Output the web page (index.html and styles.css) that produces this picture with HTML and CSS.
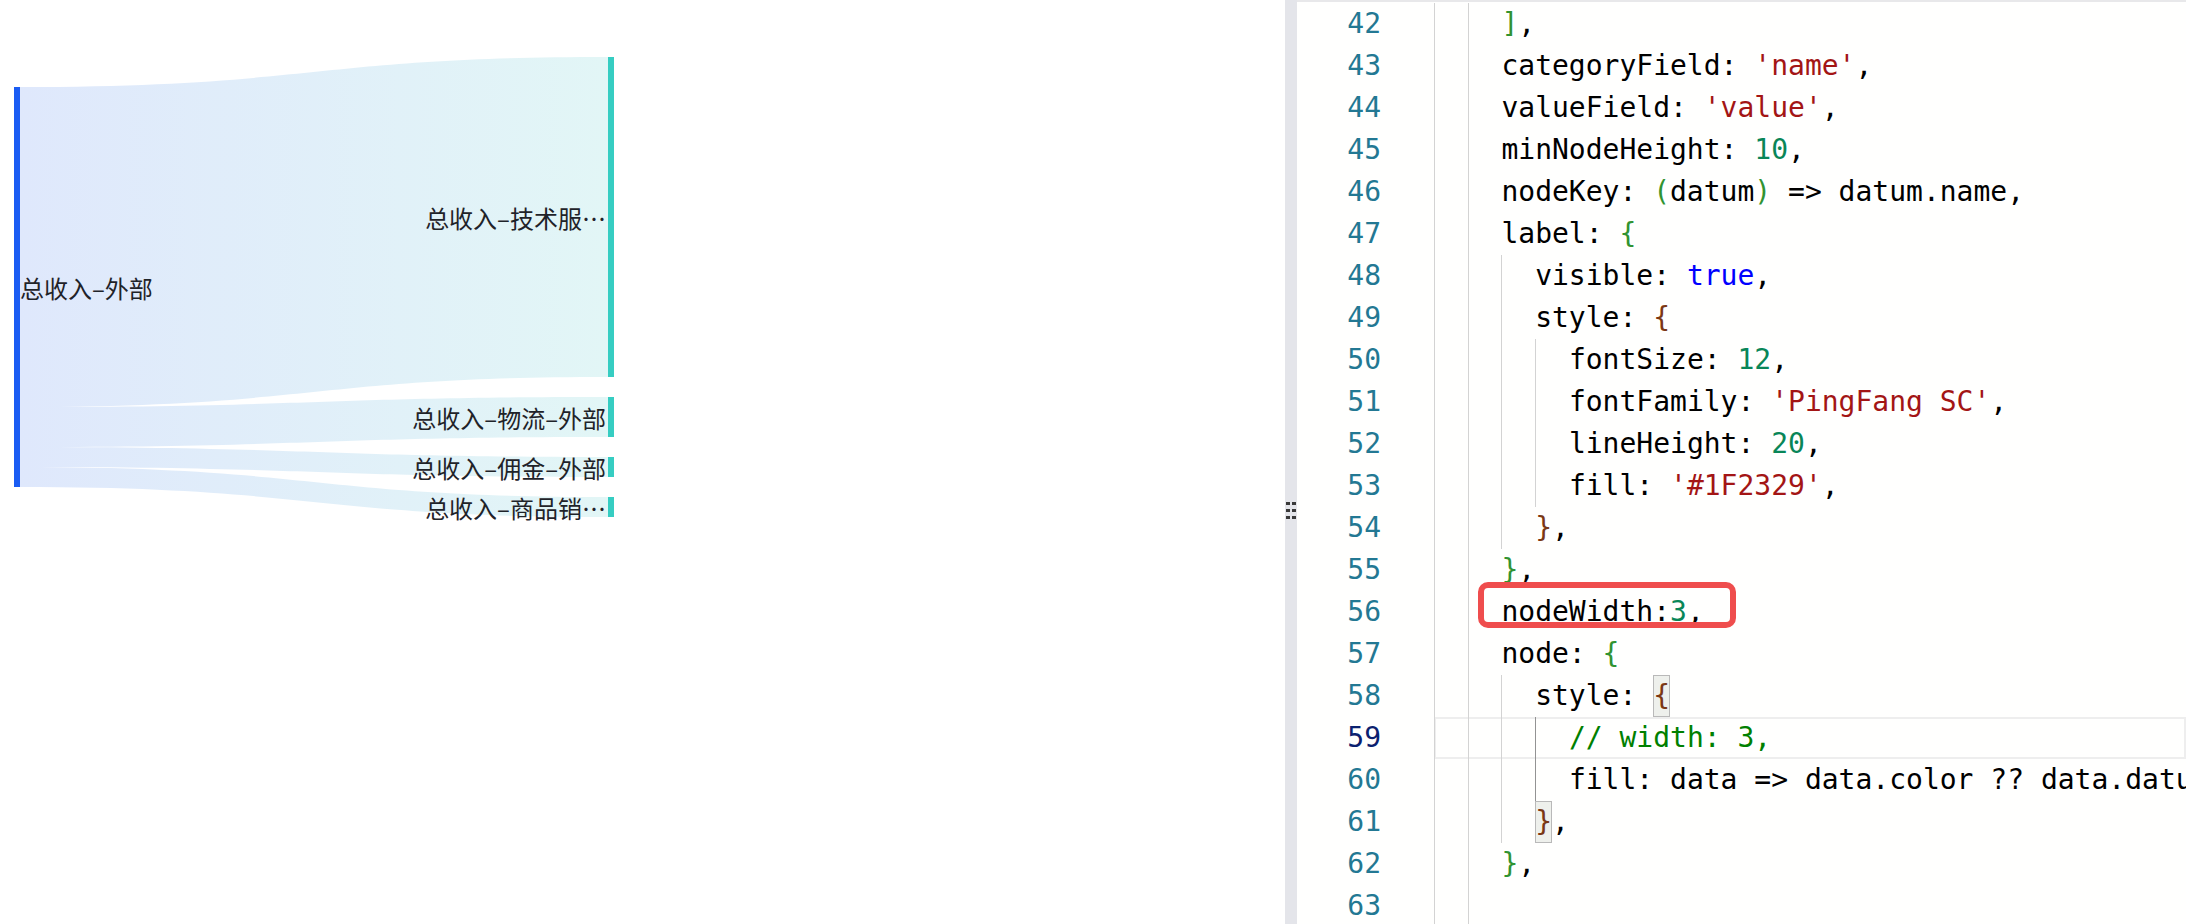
FILE: index.html
```html
<!DOCTYPE html>
<html lang="zh-CN">
<head>
<meta charset="utf-8">
<title>Sankey nodeWidth</title>
<link rel="stylesheet" href="styles.css">
</head>
<body>
<div class="app">
  <section class="chart-pane">
    <svg class="sankey" width="1285" height="924" viewBox="0 0 1285 924">
      <defs>
        <linearGradient id="lg" x1="20" y1="0" x2="608" y2="0" gradientUnits="userSpaceOnUse">
          <stop offset="0" stop-color="#dfe8fc"/>
          <stop offset="1" stop-color="#e2f6f6"/>
        </linearGradient>
      </defs>
      <path class="link" d="M20,87 C314,87 314,57 608,57 L608,377 C314,377 314,407 20,407 Z"/>
      <path class="link" d="M20,407 C314,407 314,397 608,397 L608,437 C314,437 314,447 20,447 Z"/>
      <path class="link" d="M20,447 C314,447 314,457 608,457 L608,477 C314,477 314,467 20,467 Z"/>
      <path class="link" d="M20,467 C314,467 314,497 608,497 L608,517 C314,517 314,487 20,487 Z"/>
      <rect class="node-src" x="14" y="87" width="6" height="400"/>
      <rect class="node-tgt" x="608" y="57" width="6" height="320"/>
      <rect class="node-tgt" x="608" y="397" width="6" height="40"/>
      <rect class="node-tgt" x="608" y="457" width="6" height="20"/>
      <rect class="node-tgt" x="608" y="497" width="6" height="20"/>
      <text class="lbl" x="20" y="287">总收入–外部</text>
      <text class="lbl end" x="606" y="217">总收入–技术服…</text>
      <text class="lbl end" x="606" y="417">总收入–物流–外部</text>
      <text class="lbl end" x="606" y="467">总收入–佣金–外部</text>
      <text class="lbl end" x="606" y="507">总收入–商品销…</text>
    </svg>
  </section>

  <div class="divider"><div class="handle"><i></i><i></i><i></i><i></i><i></i><i></i></div></div>

  <section class="editor">
    <div class="gutter">
      <div class="ln">42</div><div class="ln">43</div><div class="ln">44</div><div class="ln">45</div>
      <div class="ln">46</div><div class="ln">47</div><div class="ln">48</div><div class="ln">49</div>
      <div class="ln">50</div><div class="ln">51</div><div class="ln">52</div><div class="ln">53</div>
      <div class="ln">54</div><div class="ln">55</div><div class="ln">56</div><div class="ln">57</div>
      <div class="ln">58</div><div class="ln active">59</div><div class="ln">60</div><div class="ln">61</div>
      <div class="ln">62</div><div class="ln">63</div>
    </div>
    <div class="code">
      <div class="line"><span class="g">  </span><span class="g">  </span><span class="b2">]</span>,</div>
      <div class="line"><span class="g">  </span><span class="g">  </span>categoryField: <span class="s">'name'</span>,</div>
      <div class="line"><span class="g">  </span><span class="g">  </span>valueField: <span class="s">'value'</span>,</div>
      <div class="line"><span class="g">  </span><span class="g">  </span>minNodeHeight: <span class="n">10</span>,</div>
      <div class="line"><span class="g">  </span><span class="g">  </span>nodeKey: <span class="b2">(</span>datum<span class="b2">)</span> =&gt; datum.name,</div>
      <div class="line"><span class="g">  </span><span class="g">  </span>label: <span class="b2">{</span></div>
      <div class="line"><span class="g">  </span><span class="g">  </span><span class="g">  </span>visible: <span class="k">true</span>,</div>
      <div class="line"><span class="g">  </span><span class="g">  </span><span class="g">  </span>style: <span class="b3">{</span></div>
      <div class="line"><span class="g">  </span><span class="g">  </span><span class="g">  </span><span class="g">  </span>fontSize: <span class="n">12</span>,</div>
      <div class="line"><span class="g">  </span><span class="g">  </span><span class="g">  </span><span class="g">  </span>fontFamily: <span class="s">'PingFang SC'</span>,</div>
      <div class="line"><span class="g">  </span><span class="g">  </span><span class="g">  </span><span class="g">  </span>lineHeight: <span class="n">20</span>,</div>
      <div class="line"><span class="g">  </span><span class="g">  </span><span class="g">  </span><span class="g">  </span>fill: <span class="s">'#1F2329'</span>,</div>
      <div class="line"><span class="g">  </span><span class="g">  </span><span class="g">  </span><span class="b3">}</span>,</div>
      <div class="line"><span class="g">  </span><span class="g">  </span><span class="b2">}</span>,</div>
      <div class="line"><span class="g">  </span><span class="g">  </span>nodeWidth:<span class="n">3</span>,</div>
      <div class="line"><span class="g">  </span><span class="g">  </span>node: <span class="b2">{</span></div>
      <div class="line"><span class="g">  </span><span class="g">  </span><span class="g">  </span>style: <span class="b3 match">{</span></div>
      <div class="line current"><span class="g">  </span><span class="g">  </span><span class="g">  </span><span class="g act">  </span><span class="c">// width: 3,</span></div>
      <div class="line"><span class="g">  </span><span class="g">  </span><span class="g">  </span><span class="g act">  </span>fill: data =&gt; data.color ?? data.datum?.color,</div>
      <div class="line"><span class="g">  </span><span class="g">  </span><span class="g">  </span><span class="b3 match">}</span>,</div>
      <div class="line"><span class="g">  </span><span class="g">  </span><span class="b2">}</span>,</div>
      <div class="line"><span class="g">  </span><span class="g">  </span></div>
    </div>
    <div class="annot"></div>
  </section>
</div>
</body>
</html>
```
FILE: styles.css
```css
html, body {
  margin: 0;
  padding: 0;
  background: #ffffff;
}
.app {
  display: flex;
  width: 2186px;
  height: 924px;
  overflow: hidden;
}
.chart-pane {
  width: 1285px;
  flex: none;
  background: #ffffff;
}
.sankey {
  display: block;
}
.link {
  fill: url(#lg);
}
.node-src {
  fill: #1a5cf3;
}
.node-tgt {
  fill: #36cdc2;
}
.lbl {
  font-family: "Noto Sans CJK SC", "Noto Sans", sans-serif;
  font-size: 24px;
  fill: #1f2329;
  dominant-baseline: central;
}
.lbl.end {
  text-anchor: end;
}
.divider {
  width: 12px;
  flex: none;
  background: #e4e5ea;
  display: flex;
  flex-direction: column;
  align-items: center;
}
.handle {
  margin-top: 502px;
  display: grid;
  grid-template-columns: 4px 4px;
  column-gap: 2px;
  row-gap: 4px;
}
.handle i {
  display: block;
  width: 4px;
  height: 3px;
  background: #3a3a3a;
}
.editor {
  position: relative;
  flex: 1;
  display: flex;
  border-top: 2px solid #e8e8ea;
  padding-top: 1px;
  font-family: "DejaVu Sans Mono", "Liberation Mono", monospace;
  font-size: 28px;
  background: #fffffe;
  overflow: hidden;
}
.gutter {
  width: 137px;
  flex: none;
}
.ln {
  height: 42px;
  line-height: 42px;
  text-align: right;
  padding-right: 53px;
  color: #237893;
}
.ln.active {
  color: #0b216f;
}
.code {
  flex: 1;
  min-width: 0;
}
.line {
  height: 42px;
  line-height: 42px;
  white-space: pre;
  color: #000000;
}
.line.current {
  box-shadow: inset 0 0 0 2px #eeeeee;
}
.g {
  display: inline-block;
  height: 42px;
  vertical-align: top;
  box-shadow: inset 1px 0 0 #d3d3d3;
}
.g.act {
  box-shadow: inset 1px 0 0 #939393;
}
.s { color: #a31515; }
.n { color: #098658; }
.k { color: #0000ff; }
.c { color: #008000; }
.b2 { color: #319331; }
.b3 { color: #7b3814; }
.match {
  display: inline-block;
  height: 42px;
  vertical-align: top;
  background: #eef0ec;
  box-shadow: inset 0 0 0 1px #b9b9b9;
}
.annot {
  position: absolute;
  left: 181px;
  top: 580px;
  width: 246px;
  height: 34px;
  border: 6px solid #ef4d4d;
  border-radius: 10px;
  pointer-events: none;
}
```
